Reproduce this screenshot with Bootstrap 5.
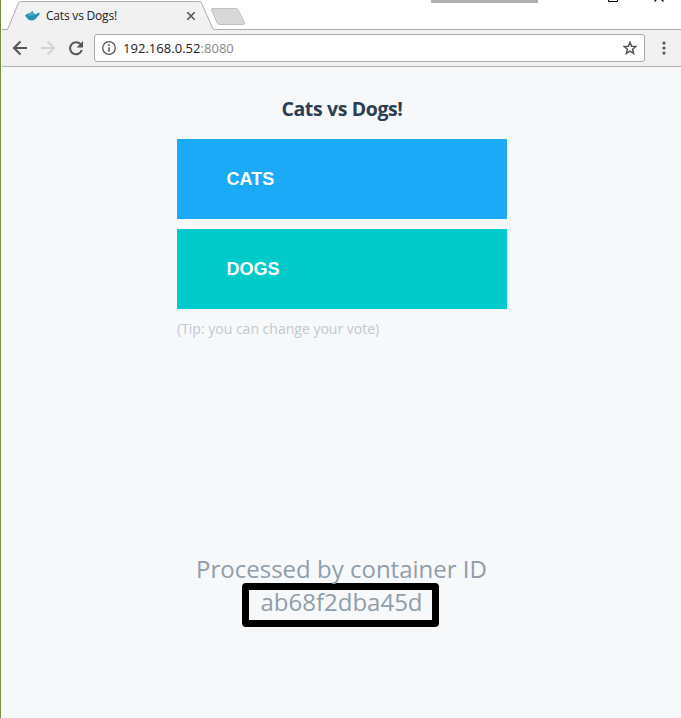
<!DOCTYPE html>
<html lang="en">
<head>
<meta charset="utf-8">
<meta name="viewport" content="width=device-width, initial-scale=1">
<title>Cats vs Dogs!</title>
<link href="https://cdn.jsdelivr.net/npm/bootstrap@5.3.0/dist/css/bootstrap.min.css" rel="stylesheet">
<style>
body{font-family:"Open Sans","Noto Sans",sans-serif;background:#f7f8fa;border-left:1px solid #76923c;height:718px;width:681px}
svg{display:block;flex:none}
.tab-strip{height:30px;background:#fff}
.strip-art{left:0;top:0}
.tab-label{font-size:12px;line-height:32px;color:#222;padding-left:45px;letter-spacing:-.2px}
.toolbar-row{height:37px;background:#f1f1f1;border-bottom:1px solid #b3b3b3;margin-left:1px;padding:4px 9.5px 4px 9px}
.nav-icons{width:83px}
.address{height:28px;width:551px;border:1px solid #a8a8a8;border-radius:3px;font-size:13px;line-height:26px;color:#222;padding:0 7px 0 6px}
.address-text{margin-left:-2px;letter-spacing:.03px}
.address .port{color:#888}
.vote-box{width:330px;margin-left:176px;padding-top:27px}
.vote-title{font-size:19.5px;line-height:30px;font-weight:700;color:#2c3e50;margin-bottom:15px;letter-spacing:-.38px}
.vote-btn{height:80px;margin-bottom:10px;padding:0 0 0 49.5px;border:0;border-radius:0;color:#fff!important;font:bold 18px "Liberation Sans",Arial,sans-serif}
.vote-cats{background:#1aaaf8!important}
.vote-dogs{background:#00cbca!important}
.tip-text{font-size:14px;line-height:20px;color:#c0c9ce}
.host-info{margin-top:213px;width:681px;font-size:24px;line-height:33px;color:#8f9ea8}
.id-frame{width:197px;height:44px;border:7px solid #000;border-radius:4px;margin:-2px 0 0 241px;line-height:24px;padding-left:2px}
</style>
<script src="https://cdn.jsdelivr.net/npm/bootstrap@5.3.0/dist/js/bootstrap.bundle.min.js"></script>
</head>
<body class="overflow-hidden">
<header>
  <div class="tab-strip position-relative overflow-hidden">
    <svg class="strip-art position-absolute" width="680" height="30" viewBox="1 0 680 30">
      <path d="M2 30V29.500H7.500L18.500 3Q19.200 1.500 20.500 1.500H199.500Q201 1.500 201.500 3L212.500 28Q213.200 29.500 214.500 29.500H681V30Z" fill="#f1f1f1"/>
      <path d="M2 29.500H7.500L18.500 3Q19.200 1.500 20.500 1.500H199.500Q201 1.500 201.500 3L212.500 28Q213.200 29.500 214.500 29.500H681" fill="none" stroke="#adadad"/>
      <path d="M213 8.500H236Q237.500 8.500 238.300 10L244.500 22.500Q245.300 24.500 243 24.500H220Q218 24.500 217.200 23L211.500 10Q211 8.500 213 8.500Z" fill="#d8d8d8" stroke="#c2c2c2"/>
      <path d="M187.300 12.300L194.700 19.700M194.700 12.300L187.300 19.700" stroke="#555" stroke-width="1.600"/>
      <path d="M25 15.500Q27 13 30 13L32.500 11L34 13.500Q35.500 14.600 36.800 13.800Q38 12.300 39.800 13Q39.500 15.800 37.300 16.800Q35.500 20.300 31.500 20.500Q28 20.300 26.500 17.500Z" fill="#278fb4"/>
      <path d="M27.500 14.500L30 13L32.500 11L34 13.500L34.500 15.500H28Z" fill="#4ba9c6"/>
      <rect x="431" y="0" width="107" height="3" fill="#b1b1b1"/>
      <path d="M608.500 0V1.500H617.500V0" fill="none" stroke="#000"/>
      <path d="M654.500 1.500L656.500 -.5M663.500 1.500L661.500 -.5" stroke="#000" stroke-width="1.200"/>
    </svg>
    <div class="tab-label position-relative">Cats vs Dogs!</div>
  </div>
  <nav class="toolbar-row d-flex align-items-center">
    <div class="nav-icons d-flex align-items-center">
      <svg width="28" height="28" viewBox="11 34 28 28" fill="none" stroke="#555" stroke-width="2"><path d="M27 48H14.500M20.500 41.500L14 48L20.500 54.500"/></svg>
      <svg width="28" height="28" viewBox="39 34 28 28" fill="none" stroke="#d2d2d2" stroke-width="2"><path d="M41 48H53.500M47.500 41.500L54 48L47.500 54.500"/></svg>
      <svg width="27" height="28" viewBox="67 34 27 28"><path d="M80.500 44.200A6 6 0 1 0 81.800 50" fill="none" stroke="#555" stroke-width="2"/><path d="M83 41V47.500H76.500Z" fill="#555"/></svg>
    </div>
    <div class="address bg-white d-flex align-items-center">
      <svg width="16" height="16" viewBox="0 0 16 16" class="me-2" fill="none" stroke="#555"><circle cx="8" cy="8" r="6.300" stroke-width="1.300"/><path d="M8 4.300V6M8 7.200V11.700" stroke-width="1.600"/></svg>
      <div class="address-text flex-grow-1"><span>192.168.0.52</span><span class="port">:8080</span></div>
      <svg width="14" height="14" viewBox="0 0 14 14"><path d="M7 1.400L8.600 5.200L12.800 5.500L9.600 8.200L10.600 12.300L7 10.100L3.400 12.300L4.400 8.200L1.200 5.500L5.400 5.200Z" fill="none" stroke="#555" stroke-width="1.500"/></svg>
    </div>
    <svg class="ms-auto" width="16" height="20" viewBox="0 0 16 20" fill="#555"><circle cx="8" cy="5" r="1.600"/><circle cx="8" cy="10" r="1.600"/><circle cx="8" cy="15" r="1.600"/></svg>
  </nav>
</header>
<main>
  <section class="vote-box">
    <h1 class="vote-title text-center">Cats vs Dogs!</h1>
    <button type="button" class="btn vote-btn vote-cats d-block w-100 text-start">CATS</button>
    <button type="button" class="btn vote-btn vote-dogs d-block w-100 text-start">DOGS</button>
    <div class="tip-text">(Tip: you can change your vote)</div>
  </section>
  <section class="host-info text-center">
    <div>Processed by container ID</div>
    <div class="id-frame">ab68f2dba45d</div>
  </section>
</main>
</body>
</html>
